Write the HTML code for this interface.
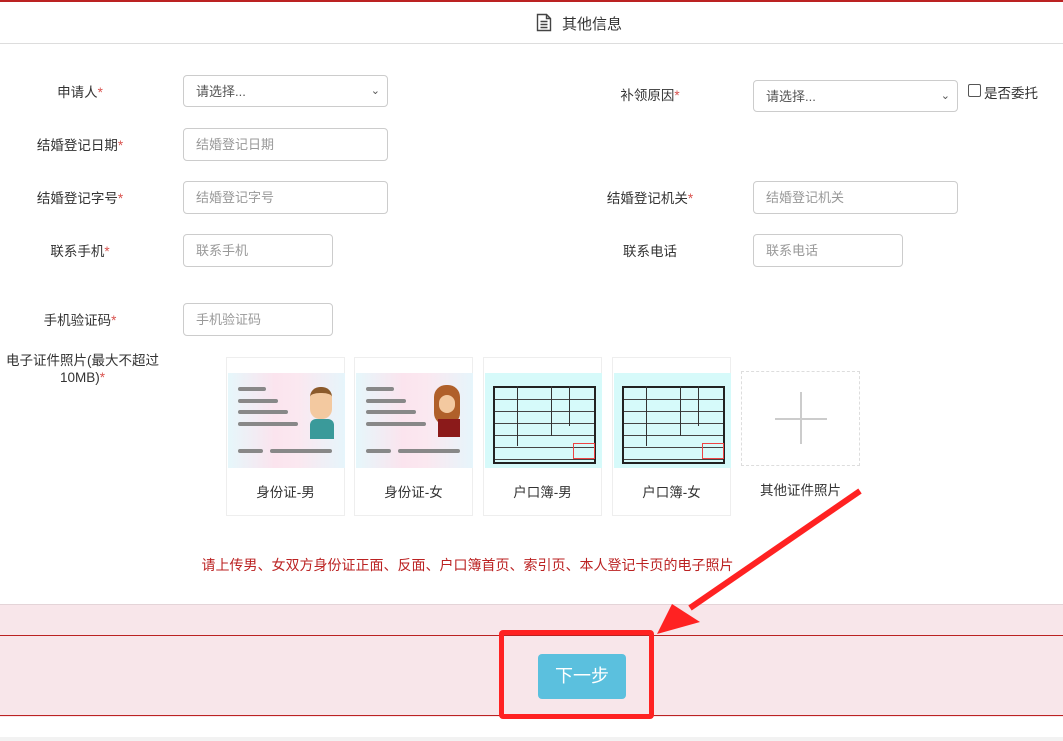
<!DOCTYPE html><html><head><meta charset="utf-8"><style>
body{margin:0;width:1063px;height:741px;position:relative;overflow:hidden;background:#fff;font-family:"Liberation Sans","Noto Sans CJK SC",sans-serif;font-size:13px;color:#333}
.a{position:absolute}
.l{position:absolute;text-align:center;font-size:13.5px;color:#333}
.l i{color:#d9534f;font-style:normal}
.in{position:absolute;height:32px;border:1px solid #ccc;border-radius:4px;box-sizing:border-box;color:#999;font-size:13px;padding-left:12px;line-height:31px;background:#fff}
.card{position:absolute;top:357px;width:119px;height:159px;border:1px solid #eee;box-sizing:border-box;text-align:center}
.card .img{position:absolute;left:1px;top:15px;width:117px;height:95px}
.card span{position:absolute;left:0;right:0;top:123px;font-size:13.5px}
.id{background:linear-gradient(90deg,#e6f7fb,#fbe4ee 40%,#fbe8f0 60%,#e6f5fb)}
.hk{background:#d6fafa}
.bar{position:absolute;height:4px;border-radius:2px;background:#888}
</style></head><body>
<div class="a" style="left:0;top:0;width:1063px;height:2px;background:#b22"></div>
<div class="a" style="left:0;top:43px;width:1063px;height:1px;background:#ddd"></div>
<svg class="a" style="left:536px;top:13px" width="16" height="19" viewBox="0 0 16 19"><path d="M1.5 1.5h9l4 4v12h-13z M10.5 1.5v4h4" fill="none" stroke="#444" stroke-width="1.4"/><path d="M4.5 8.5h7M4.5 11.5h7M4.5 14.5h7" stroke="#444" stroke-width="1.4"/></svg>
<div class="a" style="left:562px;top:13px;font-size:15px;color:#333">其他信息</div>

<div class="l" style="left:40px;top:81px;width:80px">申请人<i>*</i></div>
<div class="in" style="left:183px;top:75px;width:205px;color:#555">请选择...<span style="position:absolute;right:7px;top:0;font-size:11px">&#8964;</span></div>
<div class="l" style="left:600px;top:84px;width:100px">补领原因<i>*</i></div>
<div class="in" style="left:753px;top:80px;width:205px;color:#555">请选择...<span style="position:absolute;right:7px;top:0;font-size:11px">&#8964;</span></div>
<div class="a" style="left:968px;top:84px;width:11px;height:11px;border:1px solid #555;border-radius:2px"></div>
<div class="a" style="left:984px;top:82px;font-size:13.5px">是否委托</div>

<div class="l" style="left:20px;top:134px;width:120px">结婚登记日期<i>*</i></div>
<div class="in" style="left:183px;top:128px;width:205px;height:33px">结婚登记日期</div>
<div class="l" style="left:20px;top:187px;width:120px">结婚登记字号<i>*</i></div>
<div class="in" style="left:183px;top:181px;width:205px;height:33px">结婚登记字号</div>
<div class="l" style="left:590px;top:187px;width:120px">结婚登记机关<i>*</i></div>
<div class="in" style="left:753px;top:181px;width:205px;height:33px">结婚登记机关</div>
<div class="l" style="left:30px;top:240px;width:100px">联系手机<i>*</i></div>
<div class="in" style="left:183px;top:234px;width:150px;height:33px">联系手机</div>
<div class="l" style="left:600px;top:240px;width:100px">联系电话</div>
<div class="in" style="left:753px;top:234px;width:150px;height:33px">联系电话</div>
<div class="l" style="left:20px;top:309px;width:120px">手机验证码<i>*</i></div>
<div class="in" style="left:183px;top:303px;width:150px;height:33px">手机验证码</div>
<div class="l" style="left:0;top:352px;width:165px;line-height:17px">电子证件照片(最大不超过<br>10MB)<i>*</i></div>

<div class="card" style="left:226px"><div class="img id">
<div class="bar" style="left:10px;top:14px;width:28px"></div><div class="bar" style="left:10px;top:26px;width:40px"></div><div class="bar" style="left:10px;top:37px;width:50px"></div><div class="bar" style="left:10px;top:49px;width:60px"></div><div class="bar" style="left:10px;top:76px;width:25px"></div><div class="bar" style="left:42px;top:76px;width:62px"></div>
<div class="a" style="left:82px;top:14px;width:22px;height:26px;border-radius:10px;background:#f3c9a0;border-top:6px solid #8b5a2b"></div><div class="a" style="left:82px;top:46px;width:24px;height:20px;background:#3a9a9a;border-radius:6px 6px 0 0"></div></div><span>身份证-男</span></div>
<div class="card" style="left:354px"><div class="img id">
<div class="bar" style="left:10px;top:14px;width:28px"></div><div class="bar" style="left:10px;top:26px;width:40px"></div><div class="bar" style="left:10px;top:37px;width:50px"></div><div class="bar" style="left:10px;top:49px;width:60px"></div><div class="bar" style="left:10px;top:76px;width:25px"></div><div class="bar" style="left:42px;top:76px;width:62px"></div>
<div class="a" style="left:78px;top:12px;width:26px;height:40px;border-radius:12px;background:#b0602a"></div><div class="a" style="left:83px;top:22px;width:16px;height:18px;border-radius:8px;background:#f3c9a0"></div><div class="a" style="left:82px;top:46px;width:22px;height:18px;background:#8b1a1a"></div></div><span>身份证-女</span></div>
<div class="card" style="left:483px"><div class="img hk"><div class="a" style="left:8px;top:13px;width:103px;height:78px;border:2px solid #222;box-sizing:border-box;background:repeating-linear-gradient(#d6fafa 0 11px,#444 11px 12px)"></div><div class="a" style="left:32px;top:13px;width:1px;height:60px;background:#333"></div><div class="a" style="left:66px;top:13px;width:1px;height:50px;background:#333"></div><div class="a" style="left:84px;top:13px;width:1px;height:40px;background:#333"></div><div class="a" style="left:88px;top:70px;width:20px;height:14px;border:1px solid #e44"></div></div><span>户口簿-男</span></div>
<div class="card" style="left:612px"><div class="img hk"><div class="a" style="left:8px;top:13px;width:103px;height:78px;border:2px solid #222;box-sizing:border-box;background:repeating-linear-gradient(#d6fafa 0 11px,#444 11px 12px)"></div><div class="a" style="left:32px;top:13px;width:1px;height:60px;background:#333"></div><div class="a" style="left:66px;top:13px;width:1px;height:50px;background:#333"></div><div class="a" style="left:84px;top:13px;width:1px;height:40px;background:#333"></div><div class="a" style="left:88px;top:70px;width:20px;height:14px;border:1px solid #e44"></div></div><span>户口簿-女</span></div>
<div class="a" style="left:741px;top:371px;width:119px;height:95px;border:1px dashed #ddd;box-sizing:border-box"></div>
<div class="a" style="left:775px;top:418px;width:52px;height:2px;background:#ccc"></div>
<div class="a" style="left:800px;top:392px;width:2px;height:52px;background:#ccc"></div>
<div class="a" style="left:741px;top:479px;width:119px;text-align:center;font-size:13.5px">其他证件照片</div>

<div class="a" style="left:0;top:555px;width:935px;text-align:center;color:#b22;font-size:14px">请上传男、女双方身份证正面、反面、户口簿首页、索引页、本人登记卡页的电子照片</div>

<div class="a" style="left:0;top:604px;width:1063px;height:112px;background:#f8e6ea;border-top:1px solid #e4d4d8"></div>
<div class="a" style="left:0;top:635px;width:1063px;height:1px;background:#b22"></div>
<div class="a" style="left:0;top:715px;width:1063px;height:1px;background:#b22"></div>
<div class="a" style="left:0;top:737px;width:1063px;height:4px;background:#f2f2f2"></div>
<div class="a" style="left:538px;top:654px;width:88px;height:45px;background:#5bc0de;border-radius:4px;color:#fff;font-size:18px;text-align:center;line-height:45px">下一步</div>
<div class="a" style="left:499px;top:630px;width:155px;height:89px;border:5px solid #f22;border-radius:4px;box-sizing:border-box"></div>
<svg class="a" style="left:0;top:0" width="1063" height="741"><path d="M860 491 L690 608" stroke="#f22" stroke-width="6"/><path d="M657 634 L672 604 L700 622 Z" fill="#f22"/></svg>
</body></html>
